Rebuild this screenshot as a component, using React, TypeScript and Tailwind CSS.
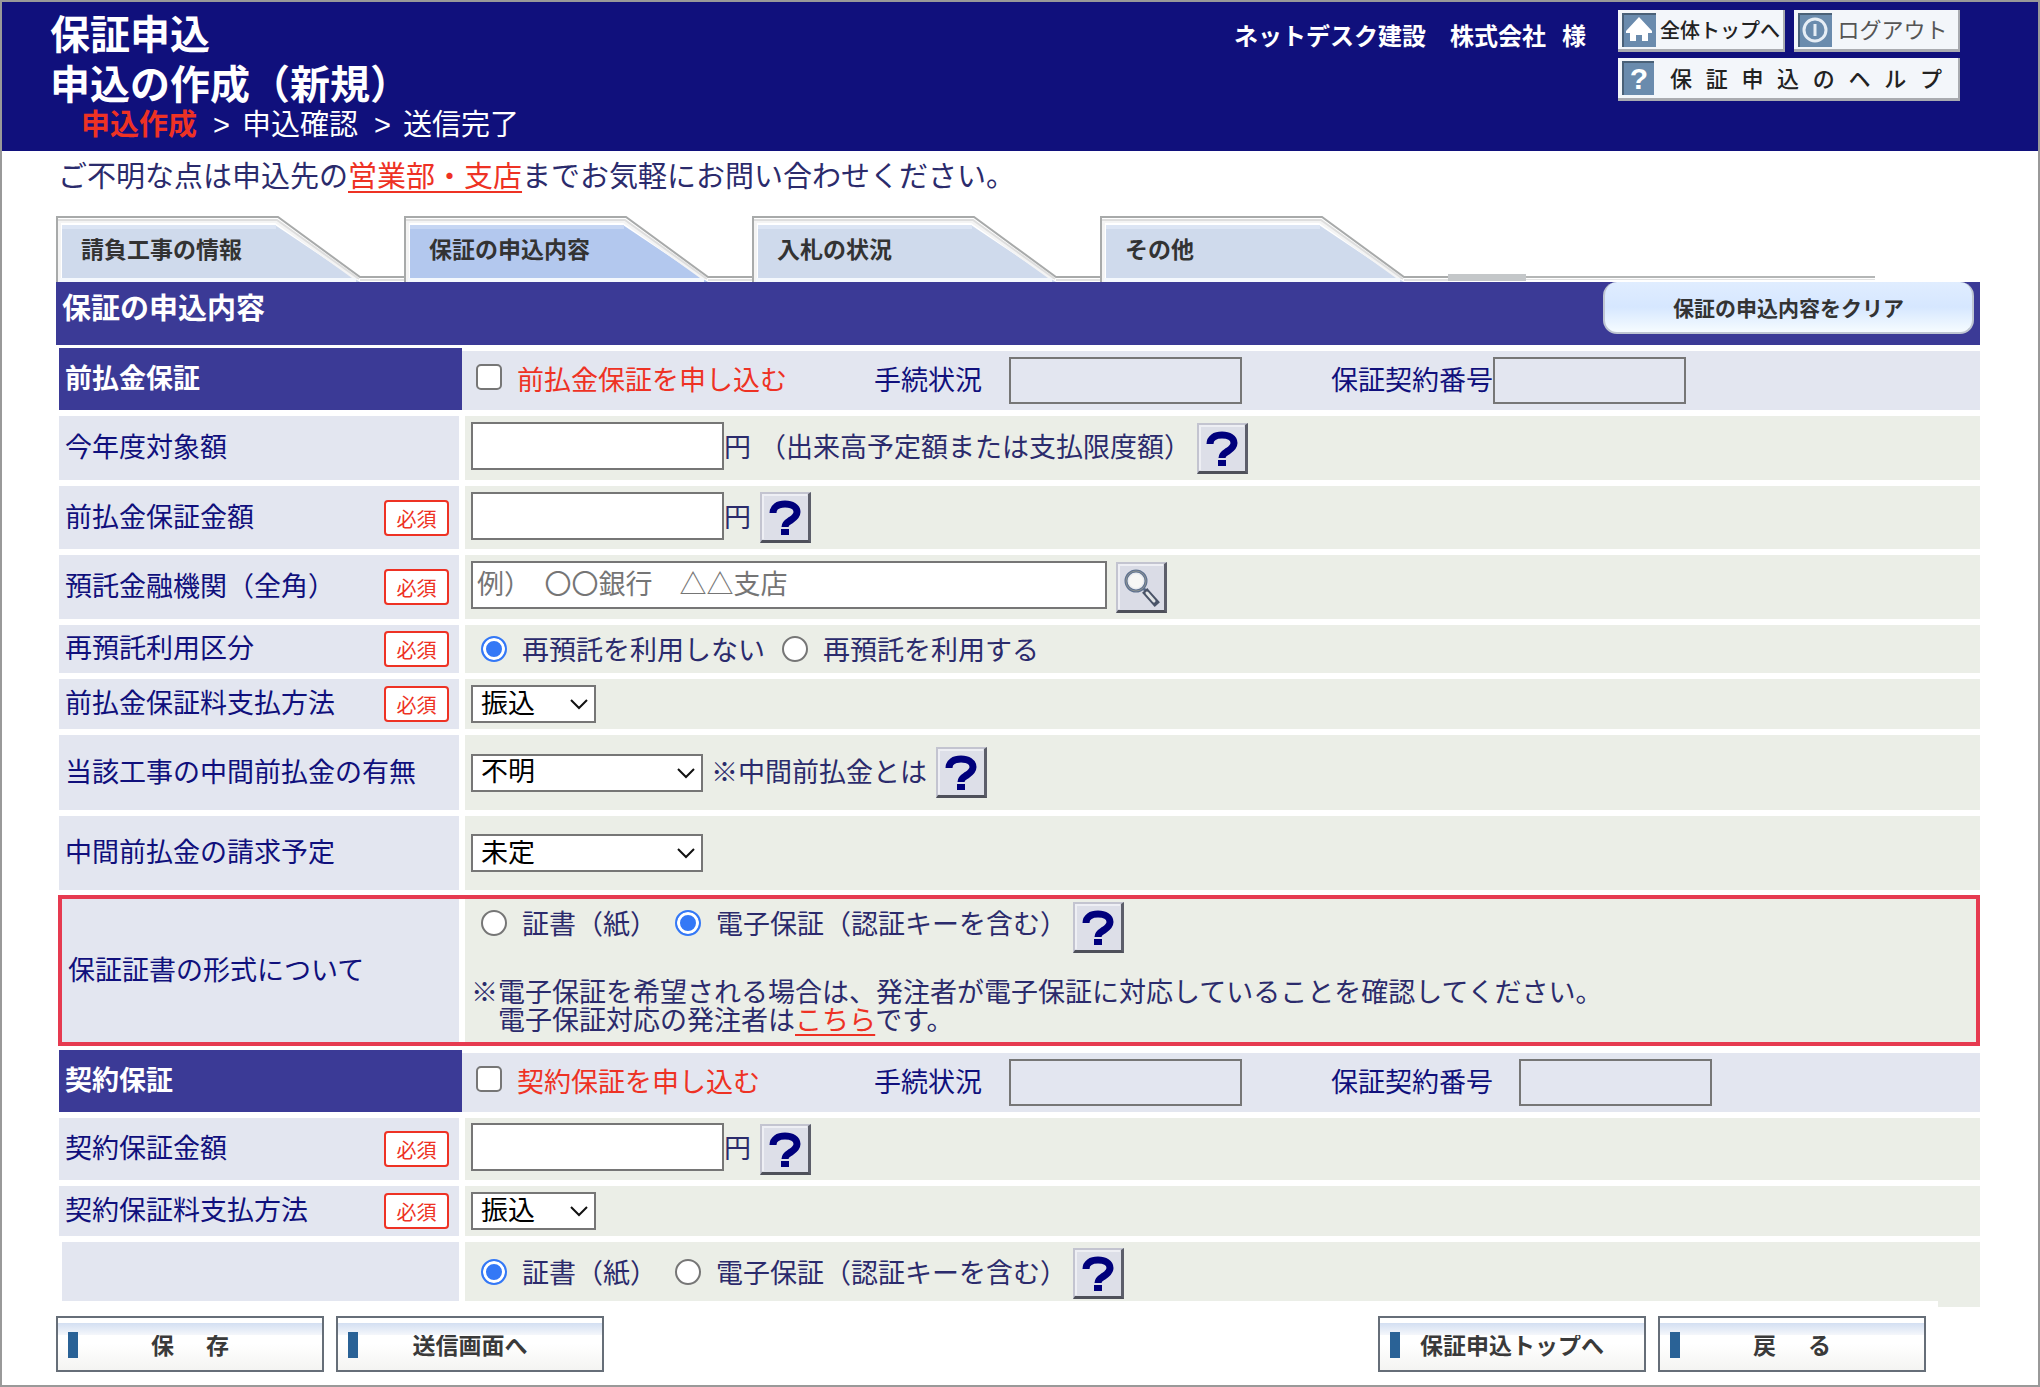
import React from "react";

const tabs = [
  { label: "請負工事の情報", active: false },
  { label: "保証の申込内容", active: true },
  { label: "入札の状況", active: false },
  { label: "その他", active: false },
];

function HelpButton({ className = "" }: { className?: string }) {
  return (
    <button
      type="button"
      aria-label="ヘルプ"
      className={`h-[51px] w-[51px] shrink-0 border-t-2 border-r-3 border-b-3 border-l-2 border-t-[#c3c4d0] border-r-[#5c5e6a] border-b-[#4e505a] border-l-[#c3c4d0] bg-[#dddfe8] ${className}`}
    >
      <svg width="46" height="46" viewBox="0 0 46 46" fill="none">
        <path d="M1 45V1h44" stroke="#eeeff4" strokeWidth="2" />
        <path d="M11 19C11 13 16 10 23 10s12 3 12 8c0 4-3 6-6 8s-6 3-6 7" stroke="#00007c" strokeWidth="7" />
        <path d="M19 35h8v6h-8z" fill="#00007c" />
      </svg>
    </button>
  );
}

function SearchButton() {
  return (
    <button
      type="button"
      aria-label="検索"
      className="h-[51px] w-[51px] shrink-0 border-t-2 border-r-3 border-b-3 border-l-2 border-t-[#c3c4d0] border-r-[#5c5e6a] border-b-[#4e505a] border-l-[#c3c4d0] bg-[#dadce6]"
    >
      <svg width="46" height="46" viewBox="0 0 46 46" fill="none">
        <path d="M1 45V1h44" stroke="#eeeff4" strokeWidth="2" />
        <path d="M25 24l4 4" stroke="#5b6b86" strokeWidth="3" />
        <path d="M29 29l8 9" stroke="#4a5468" strokeWidth="7" strokeLinecap="square" />
        <path d="M29 29l7 8" stroke="#e2e5e6" strokeWidth="3" strokeLinecap="round" />
        <circle cx="18" cy="17" r="10" fill="#e9ebee" stroke="#5f7290" strokeWidth="3" />
        <circle cx="18" cy="17" r="10" stroke="#8c9290" strokeWidth="1" />
        <circle cx="18" cy="17" r="7" fill="#f7f7f5" />
      </svg>
    </button>
  );
}

function Required() {
  return (
    <span className="mr-[10px] flex h-9 w-[65px] shrink-0 items-center justify-center rounded border-2 border-[#ee3224] bg-white pt-1 text-[20px] leading-none text-[#ee3224]">
      必須
    </span>
  );
}

type RowProps = {
  label?: string;
  htmlFor?: string;
  required?: boolean;
  className?: string;
  labelClassName?: string;
  children: React.ReactNode;
};

function Row({ label, htmlFor, required, className = "", labelClassName = "w-[400px]", children }: RowProps) {
  return (
    <div className={`flex gap-[6px] ${className}`}>
      <div className={`flex shrink-0 items-center justify-between bg-[#e3e6f0] pl-[6px] text-[#10107c] ${labelClassName}`}>
        <label htmlFor={htmlFor}>{label}</label>
        {required && <Required />}
      </div>
      <div className="flex min-w-0 flex-1 items-center bg-[#ebeee7] pl-[6px] text-[#2b2b6c]">{children}</div>
    </div>
  );
}

function AmountInput({ id }: { id: string }) {
  return <input id={id} type="text" className="mb-1 h-12 w-[253px] shrink-0 border-2 border-[#767676] bg-white px-1" />;
}

function Radio({ name, label, checked }: { name: string; label: string; checked?: boolean }) {
  return (
    <label className="flex shrink-0 items-center gap-[15px]">
      <input
        type="radio"
        name={name}
        defaultChecked={checked}
        className="mb-1 h-[26px] w-[26px] appearance-none rounded-full border-2 border-[#767676] bg-white checked:border-[#3478f6] checked:bg-[#3478f6] checked:shadow-[inset_0_0_0_3px_white]"
      />
      <span>{label}</span>
    </label>
  );
}

function Select({ id, value, className }: { id: string; value: string; className: string }) {
  return (
    <div className={`relative shrink-0 ${className}`}>
      <select
        id={id}
        defaultValue={value}
        className="block h-[38px] w-full appearance-none border-2 border-[#767676] bg-white pl-2 leading-none text-black"
      >
        <option>{value}</option>
      </select>
      <svg className="pointer-events-none absolute top-3 right-2" width="18" height="14" viewBox="0 0 18 14" fill="none">
        <path d="M1 3l8 8 8-8" stroke="#111" strokeWidth="2" />
      </svg>
    </div>
  );
}

type GuaranteeHeaderProps = { id: string; title: string; apply: string; numberGap: string };

function GuaranteeHeader({ id, title, apply, numberGap }: GuaranteeHeaderProps) {
  return (
    <div className="flex items-end">
      <h3 className="flex h-[62px] w-[403px] shrink-0 items-center bg-[#3b3a96] pl-[6px] font-bold text-white">{title}</h3>
      <div className="flex h-[59px] min-w-0 flex-1 items-center bg-[#e3e6f0] pl-[14px] text-[#10107c]">
        <label className="flex w-[398px] shrink-0 items-center gap-[15px] text-[#ee3224]">
          <input
            type="checkbox"
            className="mb-2 h-[26px] w-[26px] appearance-none rounded-[5px] border-2 border-[#767676] bg-white checked:bg-[#3478f6]"
          />
          <span>{apply}</span>
        </label>
        <label htmlFor={`${id}-status`} className="w-[135px] shrink-0">
          手続状況
        </label>
        <input id={`${id}-status`} type="text" readOnly className="h-[47px] w-[233px] shrink-0 border-2 border-[#767676] bg-transparent px-1" />
        <label htmlFor={`${id}-number`} className={`ml-[89px] shrink-0 ${numberGap}`}>
          保証契約番号
        </label>
        <input id={`${id}-number`} type="text" readOnly className="h-[47px] w-[193px] shrink-0 border-2 border-[#767676] bg-transparent px-1" />
      </div>
    </div>
  );
}

function FooterButton({ children }: { children: React.ReactNode }) {
  return (
    <button
      type="button"
      className="relative flex h-14 w-[268px] items-center justify-center gap-8 border-2 border-[#666e78] bg-linear-to-b from-white via-white to-[#f4f4f2] pt-1 text-[23px] leading-none font-bold text-[#3a3a3a]"
    >
      <span className="absolute inset-x-0 top-[5px] h-3 bg-linear-to-b from-[#d3dff2] to-[#f5f7fb]" />
      <span className="absolute top-[14px] left-[10px] h-[26px] w-[10px] bg-[#2a6296]" />
      {children}
    </button>
  );
}

export default function App() {
  return (
    <div className="min-h-screen overflow-hidden border-2 border-[#999] bg-white font-['Liberation_Sans','Noto_Sans_CJK_JP',sans-serif] text-[27px] leading-[28px]">
      <header className="flex items-start justify-between bg-[#10107c] pt-2 pr-[78px] pb-[11px] pl-12 text-white">
        <div>
          <h1 className="text-[40px] leading-[50px] font-bold">保証申込</h1>
          <h2 className="text-[40px] leading-[50px] font-bold">申込の作成（新規）</h2>
          <p className="ml-[31px] flex text-[29px] leading-[30px]">
            <span className="font-bold text-[#ee3224]">申込作成</span>
            <span className="mr-3 ml-4">&gt;</span>
            <span>申込確認</span>
            <span className="mr-3 ml-4">&gt;</span>
            <span>送信完了</span>
          </p>
        </div>

        <div className="flex items-start">
          <p className="mt-[13px] mr-8 flex gap-4 text-[24px] leading-[28px] font-bold">
            <span>ネットデスク建設　株式会社</span>
            <span>様</span>
          </p>
          <div className="grid w-[342px] grid-cols-2 gap-x-[9px] gap-y-[6px] text-[#222]">
            <button type="button" className="flex h-[42px] items-center gap-1 border-r-2 border-b-3 border-[#a9abb0] bg-[#f3f6fa] pl-1 text-[20px] leading-none font-medium">
              <svg className="shrink-0" width="34" height="34" viewBox="0 0 34 34">
                <path d="M0 0h34v34H0z" fill="#6a8bad" />
                <path d="M0 1h34M1 0v34" stroke="#4a6178" strokeWidth="2" />
                <path d="M17 4L4 18v2h4v8h6v-6h6v6h6v-8h4v-2z" fill="#fff" />
              </svg>
              <span className="pt-[3px]">全体トップへ</span>
            </button>
            <button type="button" className="flex h-[42px] items-center gap-[6px] border-r-2 border-b-3 border-[#a9abb0] bg-[#f3f6fa] pl-1 text-[22px] leading-none text-[#555]">
              <svg className="shrink-0" width="34" height="34" viewBox="0 0 34 34" fill="none">
                <path d="M0 0h34v34H0z" fill="#6a8bad" />
                <path d="M0 1h34M1 0v34" stroke="#4a6178" strokeWidth="2" />
                <circle cx="17" cy="17" r="11" stroke="#e6edf5" strokeWidth="3" />
                <path d="M17 11v12" stroke="#e6edf5" strokeWidth="3" />
              </svg>
              <span className="pt-[3px]">ログアウト</span>
            </button>
            <button type="button" className="col-span-2 flex h-[43px] items-center border-r-2 border-b-3 border-[#a9abb0] bg-[#f3f6fa] pr-4 pl-1 text-[22px] leading-none font-medium">
              <span className="flex h-[34px] w-8 items-center justify-center border-t-2 border-l-2 border-[#4a6178] bg-[#6a8bad] text-[30px] font-bold text-white">
                ?
              </span>
              <span className="ml-4 flex flex-1 justify-between pt-[3px]">
                {Array.from("保証申込のヘルプ").map((char, i) => (
                  <span key={i}>{char}</span>
                ))}
              </span>
            </button>
          </div>
        </div>
      </header>

      <main className="pr-[58px] pb-3 pl-[54px]">
        <p className="pt-[11px] pl-[2px] text-[29px] leading-[30px] text-[#2b2b6c]">
          ご不明な点は申込先の
          <a href="#branches" className="text-[#ee3224] underline underline-offset-4">
            営業部・支店
          </a>
          までお気軽にお問い合わせください。
        </p>

        <nav className="mt-6 mr-[105px] flex">
          {tabs.map((tab) => (
            <div key={tab.label} className="relative h-[66px] w-[348px] shrink-0">
              <svg className="absolute inset-0" width="348" height="66" viewBox="0 0 348 66" fill="none">
                <path d="M6 9h213l85 57H6z" fill={tab.active ? "#b3c8ee" : "#cfdaec"} />
                <path d="M6 11h214" stroke={tab.active ? "#c6d6f3" : "#dce5f4"} strokeWidth="4" />
                <path d="M3 66V5h217l81 58" stroke="#f4f4f4" strokeWidth="4" />
                <path d="M2 4h219l82 59" stroke="#dedede" strokeWidth="2" />
                <path d="M1 66V1h221l82 60h44" stroke="#a8aaaa" strokeWidth="2" />
                <path d="M304 64h44" stroke="#e2e2e2" strokeWidth="2" />
                <path d="M4 64h296" stroke="#f4f8fd" strokeWidth="4" />
              </svg>
              <a
                href="#tab"
                aria-current={tab.active ? "page" : undefined}
                className="relative flex h-full items-center pt-[2px] pl-[25px] text-[23px] font-bold text-[#333]"
              >
                {tab.label}
              </a>
            </div>
          ))}
          <div className="mb-[2px] h-1 flex-1 self-end border-t-2 border-b border-t-[#b4b6b6] border-b-[#e2e2e2]">
            <div className="relative -top-1 h-[7px] w-[78px] bg-[#c4c7c9]" />
          </div>
        </nav>

        <div className="flex h-[63px] items-start justify-between bg-[#3b3a96] pr-[6px] pl-[6px]">
          <h2 className="pt-3 text-[29px] leading-[30px] font-bold text-white">保証の申込内容</h2>
          <button
            type="button"
            className="h-[52px] w-[371px] rounded-[14px] border-2 border-t-0 border-[#bfc6d2] bg-linear-to-b from-[#e0edff] via-[#d6e7ff] to-[#f6fcff] pt-[2px] text-[21px] leading-none font-bold text-[#333]"
          >
            保証の申込内容をクリア
          </button>
        </div>

        <form className="mt-[3px] ml-[3px] flex flex-col gap-[6px]">
          <GuaranteeHeader id="advance" title="前払金保証" apply="前払金保証を申し込む" numberGap="" />
          <Row label="今年度対象額" htmlFor="year-amount" className="h-16">
            <AmountInput id="year-amount" />
            <span>円</span>
            <span className="ml-2">（出来高予定額または支払限度額）</span>
            <HelpButton className="ml-[6px]" />
          </Row>
          <Row label="前払金保証金額" htmlFor="advance-amount" required className="h-[63px]">
            <AmountInput id="advance-amount" />
            <span>円</span>
            <HelpButton className="ml-[9px]" />
          </Row>
          <Row label="預託金融機関（全角）" htmlFor="bank" required className="h-16">
            <input
              id="bank"
              type="text"
              placeholder="例）　〇〇銀行　△△支店"
              className="mr-[9px] mb-1 h-12 w-[636px] border-2 border-[#767676] bg-white px-1 placeholder:text-[#757575]"
            />
            <SearchButton />
          </Row>
          <Row label="再預託利用区分" required className="h-12">
            <div className="flex gap-[17px] pt-1 pl-[10px]">
              <Radio name="redeposit" label="再預託を利用しない" checked />
              <Radio name="redeposit" label="再預託を利用する" />
            </div>
          </Row>
          <Row label="前払金保証料支払方法" htmlFor="advance-fee" required className="h-[50px]">
            <Select id="advance-fee" value="振込" className="w-[125px]" />
          </Row>
          <Row label="当該工事の中間前払金の有無" htmlFor="interim" className="h-[75px]">
            <Select id="interim" value="不明" className="w-[232px]" />
            <span className="ml-2">※中間前払金とは</span>
            <HelpButton className="ml-[9px]" />
          </Row>
          <Row label="中間前払金の請求予定" htmlFor="interim-plan" className="h-[74px]">
            <Select id="interim-plan" value="未定" className="w-[232px]" />
          </Row>

          <Row
            label="保証証書の形式について"
            className="-mt-px -ml-px border-4 border-[#e63a50]"
            labelClassName="w-[397px]"
          >
            <div className="pt-[3px] pb-[7px]">
              <div className="flex items-start gap-[18px] pl-[10px]">
                <div className="pt-2">
                  <Radio name="advance-form" label="証書（紙）" />
                </div>
                <div className="flex items-start gap-[6px]">
                  <div className="pt-2">
                    <Radio name="advance-form" label="電子保証（認証キーを含む）" checked />
                  </div>
                  <HelpButton />
                </div>
              </div>
              <p className="mt-[26px]">※電子保証を希望される場合は、発注者が電子保証に対応していることを確認してください。</p>
              <p className="pl-[27px]">
                電子保証対応の発注者は
                <a href="#clients" className="text-[#ee3224] underline underline-offset-4">
                  こちら
                </a>
                です。
              </p>
            </div>
          </Row>

          <div className="-mt-[2px]">
            <GuaranteeHeader id="contract" title="契約保証" apply="契約保証を申し込む" numberGap="mr-[26px]" />
          </div>
          <Row label="契約保証金額" htmlFor="contract-amount" required className="h-[62px]">
            <AmountInput id="contract-amount" />
            <span>円</span>
            <HelpButton className="ml-[9px]" />
          </Row>
          <Row label="契約保証料支払方法" htmlFor="contract-fee" required className="h-[50px]">
            <Select id="contract-fee" value="振込" className="w-[125px]" />
          </Row>
          <Row className="h-[59px]" labelClassName="ml-[3px] w-[397px]">
            <div className="flex items-center gap-[18px] pt-1 pl-[10px]">
              <Radio name="contract-form" label="証書（紙）" checked />
              <div className="flex items-center gap-[6px]">
                <Radio name="contract-form" label="電子保証（認証キーを含む）" />
                <HelpButton />
              </div>
            </div>
          </Row>
        </form>
        <div className="ml-auto h-[6px] w-[42px] bg-[#ebeee7]" />

        <footer className="mt-[9px] mr-[54px] flex justify-between">
          <div className="flex gap-3">
            <FooterButton>
              <span>保</span>
              <span>存</span>
            </FooterButton>
            <FooterButton>送信画面へ</FooterButton>
          </div>
          <div className="flex gap-3">
            <FooterButton>保証申込トップへ</FooterButton>
            <FooterButton>
              <span>戻</span>
              <span>る</span>
            </FooterButton>
          </div>
        </footer>
      </main>
    </div>
  );
}
